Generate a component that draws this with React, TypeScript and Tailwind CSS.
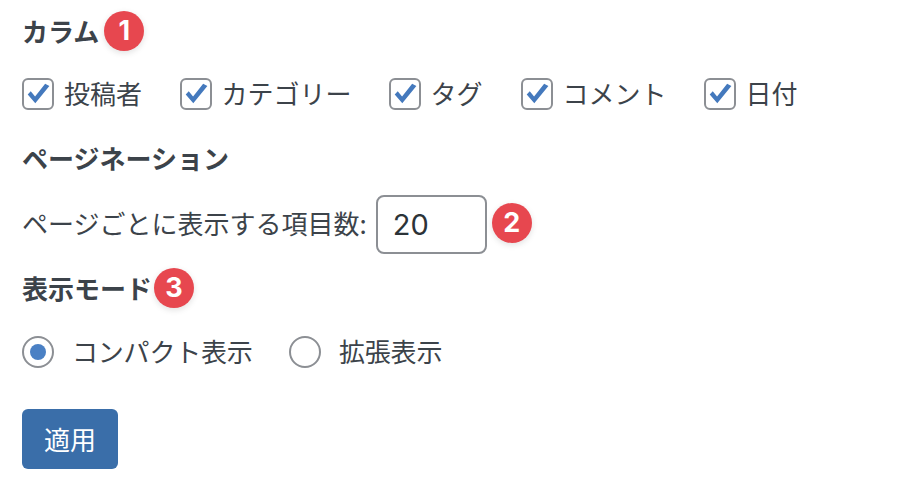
const font = '[font-family:"Noto_Sans_CJK_JP","Noto_Sans_CJK_SC",sans-serif]';

function Badge({ n }: { n: number }) {
  return (
    <span className="flex h-[40px] w-[40px] shrink-0 items-center justify-center rounded-full bg-[#e7474f] text-[27px] font-bold text-white shadow-[0_2px_6px_rgba(0,0,0,0.12)] [font-family:Inter,sans-serif]">
      {n}
    </span>
  );
}

function Check({ label, className }: { label: string; className: string }) {
  return (
    <label className={`flex items-center ${className}`}>
      <span className="mr-[10px] flex h-[32px] w-[32px] items-center justify-center rounded-[6px] border-2 border-[#8c8f94] bg-white">
        <svg viewBox="0 0 24 24" className="h-[26px] w-[26px]">
          <path d="M2.5 12.5 L9.5 20.5 L22.5 4.5 L18.6 2.5 L9.3 14.2 L5.3 9.5 Z" fill="#4479bd" />
        </svg>
      </span>
      <span className="pb-[4px]">{label}</span>
    </label>
  );
}

function Radio({ label, checked, className }: { label: string; checked?: boolean; className: string }) {
  return (
    <label className={`flex items-center ${className}`}>
      <span className="mr-[18px] flex h-[32px] w-[32px] items-center justify-center rounded-full border-2 border-[#8c8f94] bg-white">
        {checked && <span className="h-[16px] w-[16px] rounded-full bg-[#4a80c4]" />}
      </span>
      <span className="pb-[4px] tracking-[-0.2px]">{label}</span>
    </label>
  );
}

export default function App() {
  return (
    <div className={`h-[490px] w-[900px] overflow-hidden bg-white pl-[22px] text-[26px] text-[#3c434a] ${font}`}>
      <div className="flex h-[62px] items-center">
        <h3 className="pb-[2px] text-[26px] font-bold">カラム</h3>
        <div className="ml-[5px]"><Badge n={1} /></div>
      </div>

      <div className="mt-[16px] flex h-[32px] items-center">
        <Check label="投稿者" className="w-[157.5px]" />
        <Check label="カテゴリー" className="w-[209px]" />
        <Check label="タグ" className="w-[132px]" />
        <Check label="コメント" className="w-[183px]" />
        <Check label="日付" className="" />
      </div>

      <h3 className="mt-[33px] flex h-[30px] items-center pb-[2px] text-[26px] font-bold">ページネーション</h3>

      <div className="mt-[22px] flex h-[58px] items-center">
        <span className="pb-[3px]">ページごとに表示する項目数:</span>
        <input
          readOnly
          value="20"
          className="ml-[9px] h-[59px] w-[111px] rounded-[8px] border-2 border-[#8c8f94] bg-white pl-[15px] text-[29px] text-[#2c3338] outline-none [font-family:Inter,sans-serif]"
        />
        <div className="ml-[5px] mt-[-2px]"><Badge n={2} /></div>
      </div>

      <div className="mt-[15px] flex h-[40px] items-center">
        <h3 className="pb-[2px] text-[26px] font-bold">表示モード</h3>
        <div className="ml-[2px]"><Badge n={3} /></div>
      </div>

      <div className="mt-[28px] flex h-[32px] items-center">
        <Radio label="コンパクト表示" checked className="w-[267px]" />
        <Radio label="拡張表示" className="" />
      </div>

      <button className="mt-[41px] flex h-[60px] w-[96px] items-center justify-center rounded-[6px] bg-[#3a6ea9] pb-[2px] text-[26px] text-white">
        適用
      </button>
    </div>
  );
}
